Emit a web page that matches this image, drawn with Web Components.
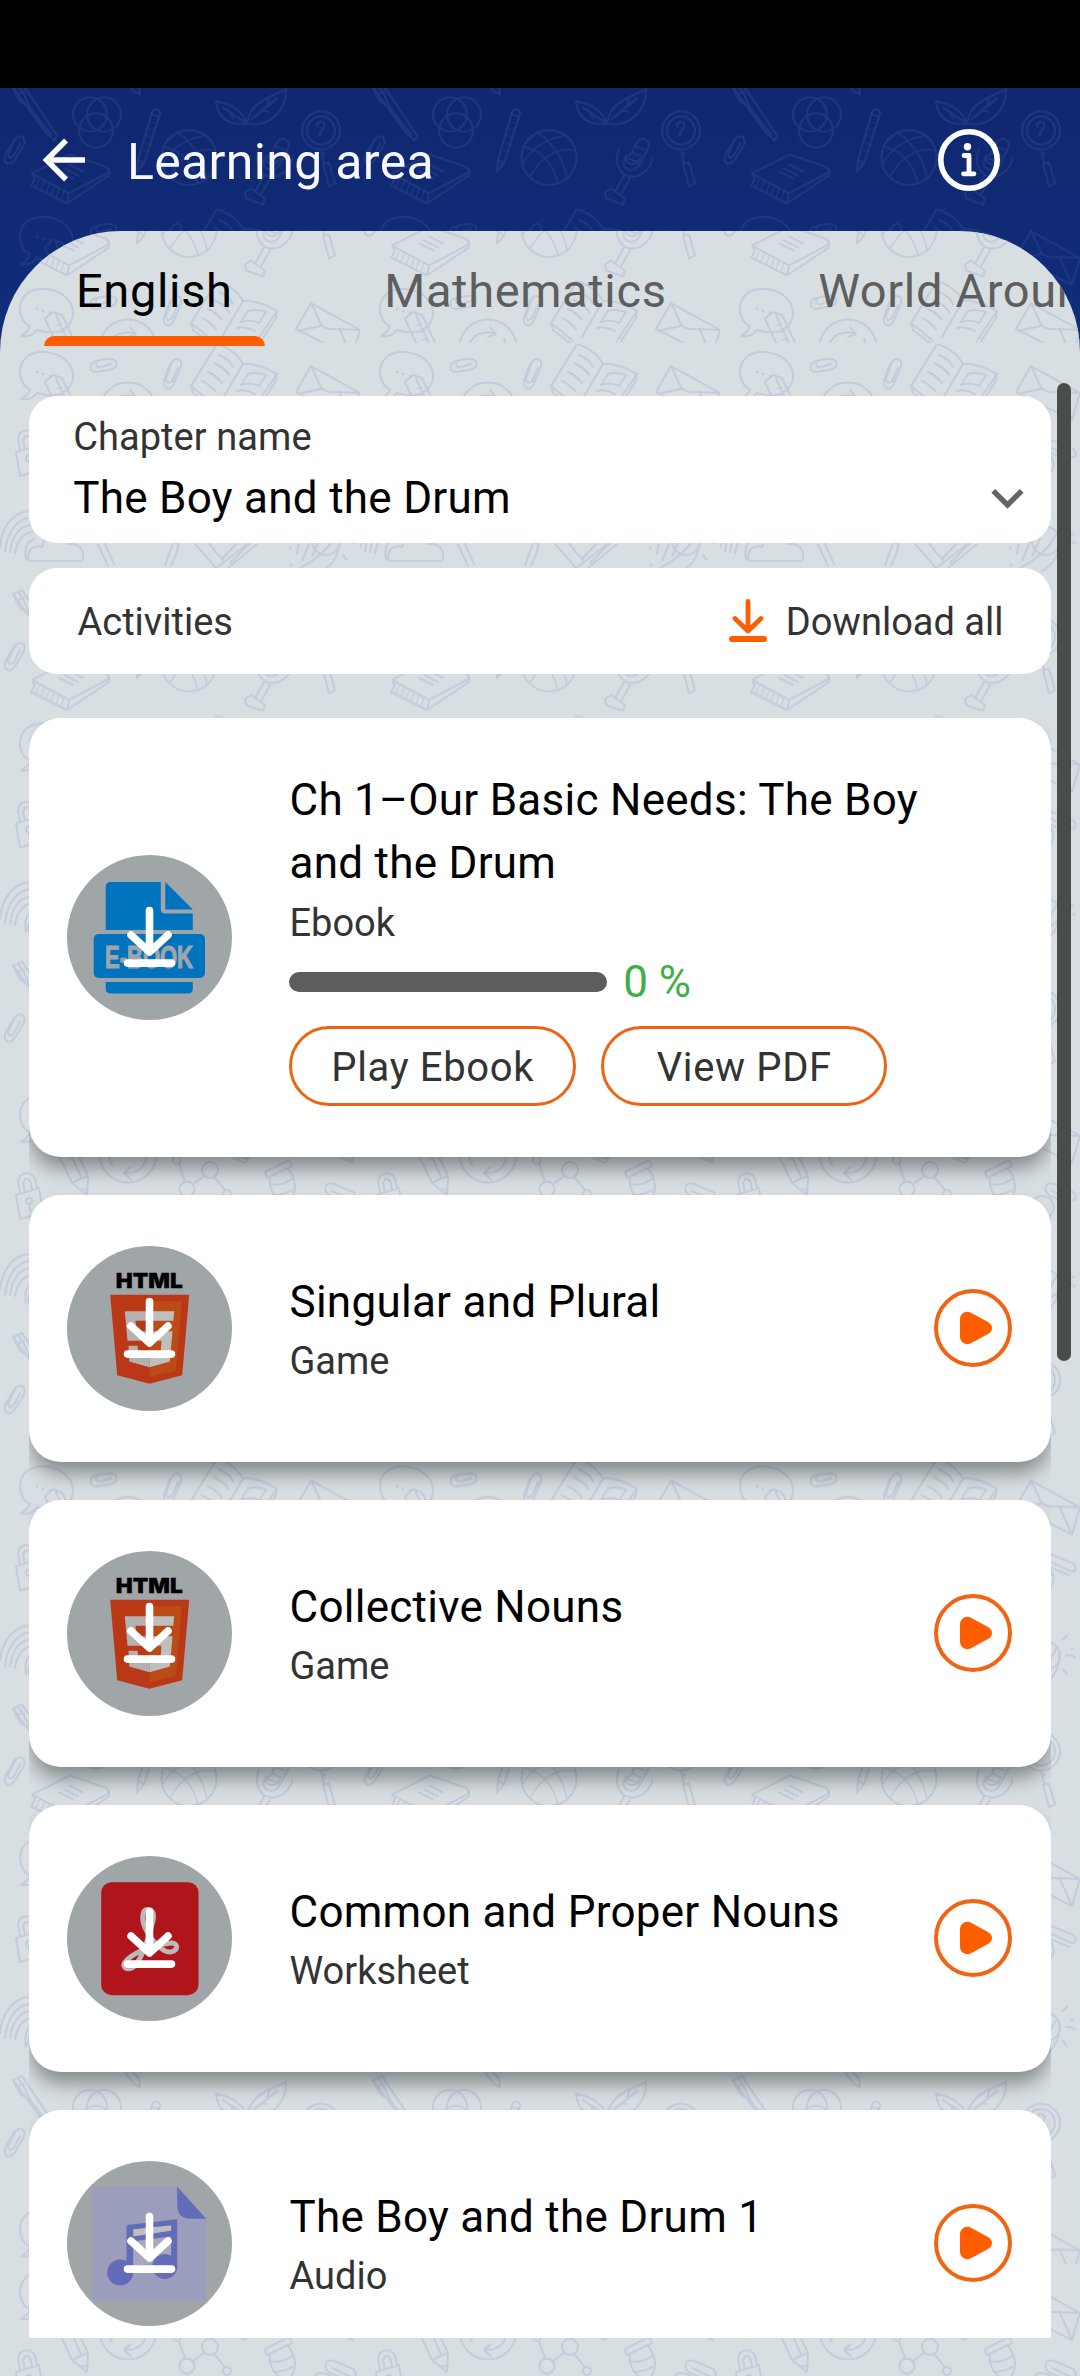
<!DOCTYPE html>
<html lang="en">
<head>
<meta charset="utf-8">
<title>Learning area</title>
<style>
  html, body { margin: 0; background: #000; }
  body { font-family: Roboto, "Liberation Sans", sans-serif; color: #000; }
</style>
</head>
<body>
<learning-app>
  <top-bar slot="bar">Learning area</top-bar>
  <tab-strip slot="tabs">
    <tab-item active>English</tab-item>
    <tab-item>Mathematics</tab-item>
    <tab-item>World Around</tab-item>
  </tab-strip>
  <chapter-select label="Chapter name">The Boy and the Drum</chapter-select>
  <activities-bar action="Download all">Activities</activities-bar>
  <activity-list>
    <activity-card kind="ebook" note="Ebook" progress="0">Ch 1–Our Basic Needs: The Boy and the Drum
      <pill-button slot="actions">Play Ebook</pill-button>
      <pill-button slot="actions">View PDF</pill-button>
    </activity-card>
    <activity-card kind="game" note="Game">Singular and Plural</activity-card>
    <activity-card kind="game" note="Game">Collective Nouns</activity-card>
    <activity-card kind="sheet" note="Worksheet">Common and Proper Nouns</activity-card>
    <activity-card kind="audio" note="Audio">The Boy and the Drum 1</activity-card>
  </activity-list>
</learning-app>

<script>
const define = (name, render) => customElements.define(name, class extends HTMLElement {
  connectedCallback() {
    if (!this.shadowRoot) this.attachShadow({ mode: 'open' }).innerHTML = render(this);
  }
});

/* School-supplies line art, one 360 x 371.5 tile. */
const TILE = `
  <g fill="none" stroke="currentColor" stroke-width="2" stroke-linecap="round" stroke-linejoin="round">
    <path d="M30 45C24 43 20 36 20 28C20 15 30 7 45 8C62 9 73 20 73 32C73 46 60 53 45 51L37 49C33 54 27 56 21 55C26 52 29 49 30 45Z"/>
    <path d="M37 28h.2M43 30h.2M50 32h.2M57 33h.2" stroke-width="2.4"/>
    <path d="M97 17C89 18 88 27 96 28L109 26C119 24 119 14 109 15L100 16C94 18 95 24 101 23L111 20"/>
    <path d="M170 20L164 36C162 45 171 48 174 39L181 23C183 14 174 12 171 20L166 35C166 40 171 40 173 35L178 24"/>
    <path d="M217 0L191 42L213 60M217 0C228 3 238 11 243 20L222 56M243 20C252 19 266 23 277 30L258 58M277 30L276 37L261 60M191 42L193 49L210 62M219 11C226 14 231 18 233 23M214 19C221 22 226 26 229 31M208 28C215 31 219 35 222 39M202 37C209 40 213 44 216 48M248 30C253 28 260 29 266 31L259 42C254 39 248 39 241 41ZM237 47C243 45 249 47 255 50"/>
    <path d="M311 22L360 49L352 76L296 48ZM311 22L321 43C323 47 330 49 338 48L360 49M321 45L298 50M340 49L352 76"/>
    <circle cx="128" cy="67" r="28.500"/><path d="M112 78C103 62 115 49 133 52M130 46l6 7l-8 3M144 58C151 73 142 86 127 86M131 80l-7 6l7 6"/>
    <path d="M45 38L53 31L62 34L88 89L87 108L72 96ZM72 96L80 92L88 89M81 102L87 102M56 34L81 90"/>
    <path d="M56 45l6-2M59 52l6-2M62 59l6-2M65 66l6-2M68 73l6-2" stroke-width="1"/>
    <circle cx="177" cy="73" r="4"/><circle cx="210" cy="83" r="8"/><circle cx="187" cy="102" r="7.500"/><circle cx="227" cy="107" r="4"/><path d="M179 77L185 95M204 89L193 97M214 90L225 103"/>
    <path d="M231 69L245 76L257 61M236 69L246 72L253 62M241 68l6 3"/>
    <path d="M265 85L289 73L292 79L267 91ZM270 91C268 105 278 112 286 118M288 82C296 91 297 103 291 113M271 97C278 99 286 96 292 92M274 108C281 108 287 106 292 103"/>
    <path d="M350 117L330 109C322 103 325 94 334 97L353 105C359 111 354 115 349 112L332 104"/>
    <path d="M16 108L39 101L43 125L20 132ZM20 106L18 95C19 84 32 84 35 92L37 101M25 105L23 96C25 90 30 91 31 97L32 103"/><circle cx="29" cy="114" r="3"/><path d="M29 117l1 7"/>
    <path d="M0 203C2 180 16 167 30 167M5 208C7 187 18 174 31 174M10 208C12 192 20 181 32 181M15 209C17 197 23 188 33 188M26 216C24 204 27 197 34 195"/>
    <path d="M28 214C28 203 36 201 42 203C45 188 62 187 68 200C79 198 86 207 82 217L30 217Z"/>
    <path d="M97 198L108 222M103 196L114 220M97 198l6-2M165 221L173 200C176 195 180 200 177 207L171 222"/>
    <path d="M190 194L216 224L254 195M203 193L224 217M216 224L221 230L257 200M222 215L242 194M230 219L250 199"/>
    <path d="M298 225C316 216 330 205 337 188M302 217L312 193M312 212L320 195M297 210L300 192M339 194C341 209 333 221 322 227"/>
    <path d="M292 193h.2M290 204h.2M352 190h.2M354 199h.2M291 221h.2" stroke-width="3"/>
    <circle cx="326" cy="197" r="14"/><path d="M343 181l4-4M346 197h6M343 211l4 5M326 176v-6M308 181l-4-4"/>
    <path d="M318 129C308 121 312 108 324 109C335 111 337 124 328 131L326 140L316 137ZM318 133l9 3M319 129l9 2"/>
    <path d="M13 250L22 246L57 298L55 303L46 295ZM18 248L24 257L30 270L51 297M13 250L20 264L30 270M16 257l8-3"/>
    <path d="M15 301L6 316C2 326 9 330 15 322L24 307C27 298 18 296 14 304L8 317C9 322 13 320 15 316L20 306"/>
    <circle cx="90" cy="277" r="17"/><circle cx="104" cy="277" r="17"/><circle cx="96" cy="293" r="17"/>
    <path d="M125 242L134 254L140 257L139 249L132 241"/>
    <path d="M152 275C153 270 161 271 160 276L144 326L137 334L138 322ZM138 322L144 326M152 277l7 2"/>
    <path d="M150 284l7 2M148 291l7 2M146 298l7 2M144 305l7 2M142 312l7 2" stroke-width="1"/>
    <circle cx="189" cy="320" r="27.500"/><path d="M178 295C194 306 205 324 207 342M164 309C181 313 193 326 198 346M162 327C174 305 193 300 205 298M170 339C180 320 198 309 214 313" stroke-width="1.500"/>
    <path d="M247 286C229 288 218 281 216 264C234 267 244 276 247 286C249 269 263 261 286 252C287 273 270 290 247 286ZM223 270L247 286M251 282L277 261M231 275l2 6M261 273l7 1M267 268l2-6"/>
    <circle cx="321" cy="293" r="19"/><circle cx="321" cy="293" r="14"/><path d="M317 289C316 282 328 283 324 290L320 294v4M321 312L324 325M323 326L329 325L335 346L329 349ZM322 317l3-1"/>
    <path d="M271 316L277 305C281 298 292 302 288 311L279 328C273 336 261 332 264 322L271 316M259 311C253 325 260 338 271 339C283 340 292 328 292 321M266 318C264 327 275 330 280 321M264 338L255 354M270 341L261 357M245 355L251 351L265 361L263 367L246 361ZM275 309l9 3M272 315l9 4M269 321l9 4"/>
    <path d="M32 336L70 317L105 329Q111 332 107 336L69 356ZM32 336L35 341L31 348L67 366L109 338L109 332M69 356L67 366M59 334L73 341M64 331L78 338M69 327L83 334"/>
    <path d="M39 342l-3 7M44 344l-3 8M49 347l-3 8M54 349l-3 8M59 351l-3 9M64 354l-3 8" stroke-width="1.200"/>
  </g>`;
let tileId = 0;
define('doodle-field', el => {
  const id = 'tile' + (tileId++);
  return `<style>:host{position:absolute;left:0;right:0;z-index:-1;overflow:hidden}svg{display:block;width:100%;height:100%}</style>
  <svg aria-hidden="true"><defs><pattern id="${id}" width="360" height="371.5" y="${el.getAttribute('phase') || 0}" patternUnits="userSpaceOnUse">${TILE}</pattern></defs>
  <rect width="100%" height="100%" fill="url(#${id})"/></svg>`;
});

define('learning-app', () => `<style>
  :host{display:flex;flex-direction:column;height:2376px;width:1080px;overflow:hidden;position:relative;isolation:isolate}
  .status{height:88px;background:#000;flex:none}
  .shell{flex:1;min-height:0;display:flex;flex-direction:column;position:relative;isolation:isolate;background:linear-gradient(#11276f,#102e7c 260px)}
  .shell>doodle-field{top:0;height:270px;color:#1e377f}
  .sheet{flex:1;min-height:0;display:flex;flex-direction:column;position:relative;isolation:isolate;overflow:hidden;background:#d8dfe2;border-radius:121px 121px 0 0}
  .sheet doodle-field{color:#c4cbdb}
  .f1{top:0;height:112px}.f2{top:113px;height:1920px}.f3{top:2033px;bottom:0}
  main{flex:1;min-height:0;display:flex;flex-direction:column;padding:52px 29px 38px 28.5px}
  .thumb{position:absolute;left:1056.500px;top:152px;width:14.500px;height:978px;border-radius:7px;background:#4a4c4b}
</style>
<div class="status"></div>
<div class="shell">
  <doodle-field phase="-250.5"></doodle-field>
  <slot name="bar"></slot>
  <div class="sheet">
    <doodle-field class="f1" phase="50"></doodle-field>
    <doodle-field class="f2"></doodle-field>
    <doodle-field class="f3"></doodle-field>
    <slot name="tabs"></slot>
    <main><slot></slot></main>
    <div class="thumb"></div>
  </div>
</div>`);

define('top-bar', () => `<style>
  :host{display:flex;align-items:center;height:143px;flex:none;color:#fff;font-size:50px;letter-spacing:.32px;padding:0 79px 0 42px;box-sizing:border-box}
  svg{display:block;flex:none}
  h1{font:inherit;margin:0;flex:1;padding:5px 0 0 41px;color:#f8f8ff}
</style>
<svg width="44" height="44" viewBox="0 0 44 44" fill="none" stroke="#fff" stroke-width="5.5"><path d="M43 22H5M24 2.500L4.500 22L24 41.500"/></svg>
<h1><slot></slot></h1>
<svg width="64" height="64" viewBox="0 0 64 64" fill="none" stroke="#fff"><circle cx="32" cy="32" r="28.200" stroke-width="5.600"/><circle cx="30.500" cy="18.800" r="3.700" fill="#fff" stroke="none"/><path d="M27 27.500H32V45.800M26.500 45.800H37" stroke-width="4.800" stroke-linecap="round" stroke-linejoin="round"/></svg>`);

define('tab-strip', () => `<style>:host{display:flex;height:113px;flex:none;gap:87.600px;padding-left:44px;white-space:nowrap}</style><slot></slot>`);
define('tab-item', el => `<style>
  :host{display:flex;flex-direction:column;flex:none;height:115px;color:#5e5e5e}
  :host([active]){color:#000}
  span{padding:0 32px;margin-top:30px;font-size:47px;line-height:60px;letter-spacing:.65px}
  i{margin-top:auto;height:10.500px;border-radius:11px 11px 0 0;background:#ff5e00}
</style><span><slot></slot></span>${el.hasAttribute('active') ? '<i></i>' : ''}`);

define('chapter-select', el => `<style>
  :host{display:flex;align-items:flex-end;justify-content:space-between;height:146.500px;flex:none;box-sizing:border-box;padding:0 27px 15px 44.700px;background:#fff;border-radius:28px}
  .text{display:flex;flex-direction:column;gap:6px;height:116px}
  label{font-size:38px;line-height:50px;color:#333;letter-spacing:.06px}
  b{font-weight:400;font-size:44px;line-height:60px;letter-spacing:.28px}
  svg{display:block;margin-bottom:18px}
</style>
<div class="text"><label>${el.getAttribute('label')}</label><b><slot></slot></b></div>
<svg width="33" height="22" viewBox="0 0 33 22" fill="none" stroke="#646464" stroke-width="5.400"><path d="M2.300 2.800L16.500 17L30.700 2.800"/></svg>`);

define('activities-bar', el => `<style>
  :host{display:flex;align-items:center;justify-content:space-between;height:106.500px;flex:none;margin-top:25px;box-sizing:border-box;padding:2px 47.500px 0 49px;background:#fff;border-radius:28px;font-size:38px;line-height:50px;color:#333}
  div{display:flex;align-items:center;gap:19px}
  svg{display:block;margin-top:-2px}
</style>
<span><slot></slot></span>
<div><svg width="38" height="44" viewBox="0 0 38 44" fill="none" stroke="#ff5e00" stroke-width="4.800" stroke-linecap="round" stroke-linejoin="round"><path d="M19 2.500V31M6 19.500L19 32L32 19.500"/><path d="M3 40H35" stroke-width="6"/></svg><span>${el.getAttribute('action')}</span></div>`);

define('activity-list', () => `<style>:host{display:flex;flex-direction:column;gap:38px;margin-top:44px;flex:1;min-height:0;overflow:hidden}</style><slot></slot>`);

const GLYPHS = {
  ebook: `<g fill="#0073be"><path d="M-38.800-55.500H11.300V-28.500Q11.300-24 15.800-24H43.300V-7.500H-43.800V-50.500Q-43.800-55.500-38.800-55.500ZM15.800-55.500L43.300-28H15.800Z"/><rect x="-55.800" y="-3.500" width="111.300" height="44" rx="5"/><path d="M-43.800 44.500H43.300V51Q43.300 56 38.300 56H-38.800Q-43.800 56-43.800 51Z"/></g>
    <text x="-44.500" y="30" font-family="'Liberation Sans Narrow','Liberation Sans',sans-serif" font-weight="700" font-size="32" textLength="88" lengthAdjust="spacingAndGlyphs" fill="#a0a5a7" stroke="#a0a5a7" stroke-width="1.200">E-BOOK</text>`,
  game: `<text x="-33.800" y="-41" font-family="Inter,'Liberation Sans',sans-serif" font-weight="900" font-size="20.300" textLength="67" lengthAdjust="spacingAndGlyphs" fill="#000" stroke="#000" stroke-width=".3">HTML</text>
    <path fill="#bb3817" d="M-39.300-33.700H39.700L32.700 46.700L0 55.300L-32.300 46.700Z"/><path fill="#bc4c15" d="M0-27.300H32.300L26.300 42.300L0 48.700Z"/>
    <path fill="#b3b2b1" d="M-24.700-17.300H0V-7.700H-14L-13 2.700H0V12.300H-22ZM-21 17.300H-12L-11 25.500L0 28.500V38.700L-20.300 33Z"/><path fill="#bfbfbf" d="M0-17.300H24.700L23.800-7.700H0ZM0 2.700H23L20.300 33L0 38.700V28.500L11 25.500L12 12.300H0Z"/>`,
  sheet: `<rect x="-48.300" y="-56.300" width="97.300" height="113" rx="10.500" fill="#b0151b"/><g transform="scale(.3333)"><path fill="none" stroke="#bcb8b8" stroke-width="15" d="M-5-87C-25-87-25-50-8-22C5 5 40 45 65 40C90 35 85 10 60 14C20 18-40 38-65 62C-90 85-70 95-52 88C-25 70-5 5 8-45C18-75 8-87-5-87Z"/></g>`,
  audio: `<g transform="scale(.3333)"><path fill="#9a9dbc" d="M-171-170H83L170-74V172H-171Z"/><path fill="#636cb8" d="M83-170L170-74H120Q83-76 83-116Z"/>
    <path fill="#bdbdbd" d="M-49-43L65-55V-38L-49-21Z"/><path fill="#a6a8c2" d="M-49-7L65-21V35L-49 80Z"/>
    <path fill="#636cb8" fill-rule="evenodd" d="M-69-50Q-69-55-63-56L83-73V70H65V-21L-49-7V87H-69ZM-49-43V-21L65-38V-55Z"/><circle cx="-88" cy="87" r="39" fill="#636cb8"/><circle cx="46" cy="69" r="37.500" fill="#636cb8"/></g>`
};
define('activity-badge', el => `<style>:host{display:block;width:165px;height:165px;flex:none}svg{display:block}</style>
<svg width="165" height="165" viewBox="-82.500 -82.500 165 165"><circle r="82.500" fill="#a0a5a7"/>${GLYPHS[el.getAttribute('kind')]}
<path fill="none" stroke="#fff" stroke-width="7.600" stroke-linecap="round" stroke-linejoin="round" d="M0-27V14M-18.500-2.500L0 14.500L18.500-2.500M-22 25.600H22"/></svg>`);

define('pill-button', () => `<style>:host{display:flex;align-items:center;justify-content:center;box-sizing:border-box;width:286.500px;height:80px;border:3.500px solid #ee6414;border-radius:40px;font-size:40px;line-height:50px;letter-spacing:.65px;color:#333;padding-top:3px}</style><span><slot></slot></span>`);

define('play-button', () => `<style>:host{display:block;flex:none;margin-top:-2px}svg{display:block}</style>
<svg width="78" height="78" viewBox="-39 -39 78 78"><circle r="37" fill="none" stroke="#f06414" stroke-width="4"/><path fill="#ff5e00" d="M-13-8.500C-13-14.500-7-18-2-15.200L14.500-6.300C20.500-3 20.500 3 14.500 6.300L-2 15.200C-7 18-13 14.500-13 8.500Z"/></svg>`);

define('activity-card', el => {
  const p = el.getAttribute('progress');
  return `<style>
  :host{display:flex;align-items:center;flex:none;box-sizing:border-box;height:${p === null ? 267 : 439}px;padding:0 39px 0 38.300px;background:#fff;border-radius:32px;box-shadow:0 14px 20px -3px rgba(0,0,0,.40)}
  .body{flex:1;margin-left:57.700px;display:flex;flex-direction:column;gap:${p === null ? 2 : 3.5}px}
  h2{margin:0;max-width:645px;font-weight:400;font-size:44px;line-height:63px;letter-spacing:.27px;color:#000}
  .note{font-size:38px;line-height:50px;color:#333}
  .progress{display:flex;align-items:center;gap:15.700px;height:60px;color:#3fae4a;font-size:44px}
  .progress i{width:318px;height:19.500px;border-radius:10px;background:#5d5d5d}
  .actions{display:flex;gap:25px;margin-top:11px}
</style>
<activity-badge kind="${el.getAttribute('kind')}"></activity-badge>
<div class="body"><h2><slot></slot></h2><div class="note">${el.getAttribute('note')}</div>
${p === null ? '' : `<div class="progress"><i></i><span>${p} %</span></div><div class="actions"><slot name="actions"></slot></div>`}</div>
${p === null ? '<play-button></play-button>' : ''}`;
});
</script>
</body>
</html>
